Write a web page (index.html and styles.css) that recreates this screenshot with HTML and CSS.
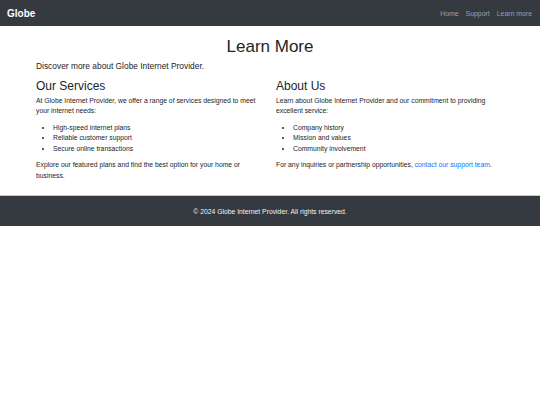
FILE: index.html
```html
<!DOCTYPE html>
<html lang="en">
<head>
    <meta charset="UTF-8">
    <meta name="viewport" content="width=device-width, initial-scale=1.0">
    <title>Learn More - Globe Internet Provider</title>
    <link rel="stylesheet" href="styles.css">
</head>
<body>

    <!-- 상단 네비게이션 -->
    <nav class="navbar">
        <a class="brand" href="#">Globe</a>
        <div class="nav-links">
            <a href="#">Home</a>
            <a href="#">Support</a>
            <a href="#">Learn more</a>
        </div>
    </nav>

    <div class="container">
        <h1>Learn More</h1>
        <p class="lead">Discover more about Globe Internet Provider.</p>

        <div class="row">
            <div class="col">
                <h2>Our Services</h2>
                <p>At Globe Internet Provider, we offer a range of services designed to meet your internet needs:</p>
                <ul>
                    <li>High-speed internet plans</li>
                    <li>Reliable customer support</li>
                    <li>Secure online transactions</li>
                </ul>
                <p>Explore our featured plans and find the best option for your home or business.</p>
            </div>
            <div class="col">
                <h2>About Us</h2>
                <p>Learn about Globe Internet Provider and our commitment to providing excellent service:</p>
                <ul>
                    <li>Company history</li>
                    <li>Mission and values</li>
                    <li>Community involvement</li>
                </ul>
                <p>For any inquiries or partnership opportunities, <a href="#">contact our support team</a>.</p>
            </div>
        </div>
    </div>

    <footer class="footer">
        <p>&copy; 2024 Globe Internet Provider. All rights reserved.</p>
    </footer>

</body>
</html>
```

FILE: styles.css
```css
body {
    font-family: 'Liberation Sans', Arial, sans-serif;
    margin: 0;
    color: #212529;
    background: #fff;
}

a {
    color: #007bff;
    text-decoration: none;
}

.navbar {
    display: flex;
    justify-content: space-between;
    align-items: center;
    height: 26px;
    padding: 0 8px 0 7px;
    background: #343a40;
}

.brand {
    color: #fff;
    font-size: 10px;
    font-weight: bold;
}

.nav-links {
    display: flex;
    gap: 7px;
}

.nav-links a {
    color: rgba(255, 255, 255, 0.5);
    font-size: 6.9px;
}

.container {
    width: 468px;
    margin: 0 auto;
    padding-top: 11px;
    padding-bottom: 14px;
}

h1 {
    font-size: 17px;
    font-weight: normal;
    line-height: 1.2;
    text-align: center;
    margin: 0 0 3px;
}

.lead {
    font-size: 8.4px;
    line-height: 1.5;
    margin: 0 0 6px;
}

.row {
    display: grid;
    grid-template-columns: 1fr 1fr;
    gap: 12px;
}

h2 {
    font-size: 12px;
    font-weight: normal;
    line-height: 1.2;
    margin: 0 0 2.4px;
}

.col p, .col ul {
    font-size: 6.8px;
    line-height: 10.6px;
    margin: 0 0 5.6px;
}

.col ul {
    padding-left: 17px;
}

.col p:last-child {
    margin-bottom: 0;
}

.footer {
    background: #343a40;
    border-top: 1px solid #c8cacc;
    height: 30px;
    display: flex;
    align-items: center;
    justify-content: center;
}

.footer p {
    color: #f1f2f3;
    font-size: 6.8px;
    margin: 0;
}
```
